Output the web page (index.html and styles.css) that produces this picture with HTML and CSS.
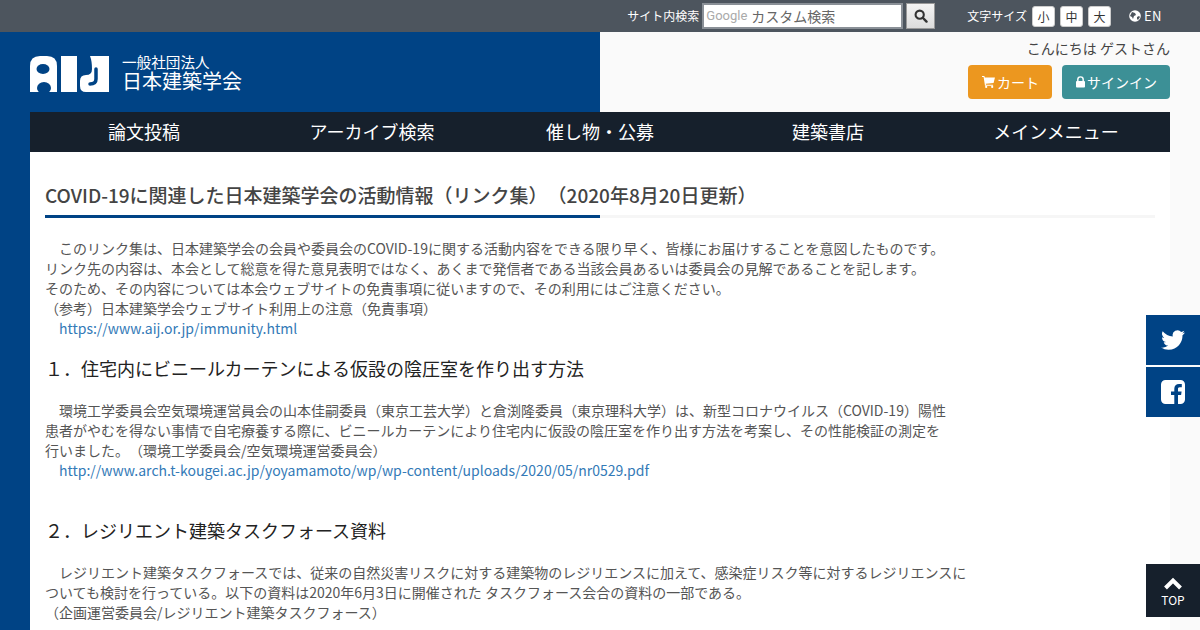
FILE: index.html
```html
<!DOCTYPE html>
<html lang="ja">
<head>
    <meta charset="UTF-8">
    <meta name="viewport" content="width=device-width, initial-scale=1.0">
    <title>COVID-19に関連した日本建築学会の活動情報</title>
    <link rel="stylesheet" href="styles.css">
</head>
<body>
    <div class="topbar">
        <span class="search-label">サイト内検索</span>
        <div class="search-box">
            <span class="google">Google</span>
            <span class="search-hint">カスタム検索</span>
        </div>
        <button class="search-btn" aria-label="検索">
            <svg viewBox="0 0 16 16" width="14" height="14"><circle cx="6.5" cy="6.5" r="4.7" fill="none" stroke="#333" stroke-width="2.4"/><path d="M10 10l4.3 4.3" stroke="#333" stroke-width="2.8" stroke-linecap="round"/></svg>
        </button>
        <span class="size-label">文字サイズ</span>
        <span class="size-btn">小</span>
        <span class="size-btn">中</span>
        <span class="size-btn">大</span>
        <a class="lang" href="#">
            <svg viewBox="0 0 12 12" width="12" height="12"><circle cx="6" cy="6" r="5.8" fill="#fff"/><path d="M3 2l3 1 1 2-2 1-1 3-1-2-2-1zM8 7l2-1 1 1-2 3-1-1z" fill="#4d555e"/></svg>
            EN
        </a>
    </div>

    <div class="page">
        <header class="header">
            <div class="header-left">
                <svg class="logo-mark" viewBox="0 0 80 36" width="80" height="36">
                    <path d="M0 36V10Q0 0 10 0H17Q27 0 27 10V36z" fill="#fff"/>
                    <ellipse cx="13" cy="13" rx="6.500" ry="5" fill="#004385"/>
                    <ellipse cx="14" cy="32" rx="7" ry="6" fill="#004385"/>
                    <rect x="0" y="36" width="27" height="2" fill="#004385"/>
                    <rect x="31" y="0" width="16" height="36" fill="#fff"/>
                    <path d="M60 0H79V36H56Q50 36 50 30V25Q50 19 56 19Q62 19 62 13Q62 5 60 0z" fill="#fff"/>
                    <path d="M66 13V23Q66 28 60 28" fill="none" stroke="#004385" stroke-width="3.500" stroke-linecap="round"/>
                </svg>
                <div class="logo-text">
                    <span class="logo-small">一般社団法人</span>
                    <span class="logo-big">日本建築学会</span>
                </div>
            </div>
            <div class="header-right">
                <p class="greeting">こんにちは ゲストさん</p>
                <div class="header-btns">
                    <a class="btn btn-cart" href="#">
                        <svg viewBox="0 0 14 13" width="13" height="12"><path d="M0 0h2.500l.5 1.500h11L12.500 7.500 4 8.500l.3 1H12v1H3.200L1.700 1H0z" fill="#fff"/><circle cx="4.500" cy="11.800" r="1.200" fill="#fff"/><circle cx="11" cy="11.800" r="1.200" fill="#fff"/></svg>カート
                    </a>
                    <a class="btn btn-signin" href="#">
                        <svg viewBox="0 0 10 13" width="9" height="12"><path d="M2 6V3.800a3 3 0 0 1 6 0V6" fill="none" stroke="#fff" stroke-width="1.600"/><rect x="0" y="5.500" width="10" height="7" rx="1" fill="#fff"/></svg>サインイン
                    </a>
                </div>
            </div>
        </header>

        <nav class="nav">
            <a href="#">論文投稿</a>
            <a href="#">アーカイブ検索</a>
            <a href="#">催し物・公募</a>
            <a href="#">建築書店</a>
            <a href="#">メインメニュー</a>
        </nav>

        <main class="content">
            <h2 class="page-title"><span>COVID-19に関連した日本建築学会の活動情報（リンク集）（2020年8月20日更新）</span></h2>

            <p class="block">　このリンク集は、日本建築学会の会員や委員会のCOVID-19に関する活動内容をできる限り早く、皆様にお届けすることを意図したものです。<br>
            リンク先の内容は、本会として総意を得た意見表明ではなく、あくまで発信者である当該会員あるいは委員会の見解であることを記します。<br>
            そのため、その内容については本会ウェブサイトの免責事項に従いますので、その利用にはご注意ください。<br>
            （参考）日本建築学会ウェブサイト利用上の注意（免責事項）<br>
            　<a href="#">https://www.aij.or.jp/immunity.html</a></p>

            <h3 class="section-title">１．住宅内にビニールカーテンによる仮設の陰圧室を作り出す方法</h3>

            <p class="block">　環境工学委員会空気環境運営員会の山本佳嗣委員（東京工芸大学）と倉渕隆委員（東京理科大学）は、新型コロナウイルス（COVID-19）陽性<br>
            患者がやむを得ない事情で自宅療養する際に、ビニールカーテンにより住宅内に仮設の陰圧室を作り出す方法を考案し、その性能検証の測定を<br>
            行いました。（環境工学委員会/空気環境運営委員会）<br>
            　<a href="#">http://www.arch.t-kougei.ac.jp/yoyamamoto/wp/wp-content/uploads/2020/05/nr0529.pdf</a></p>

            <h3 class="section-title section-gap">２．レジリエント建築タスクフォース資料</h3>

            <p class="block">　レジリエント建築タスクフォースでは、従来の自然災害リスクに対する建築物のレジリエンスに加えて、感染症リスク等に対するレジリエンスに<br>
            ついても検討を行っている。以下の資料は2020年6月3日に開催された タスクフォース会合の資料の一部である。<br>
            （企画運営委員会/レジリエント建築タスクフォース）</p>
        </main>
    </div>

    <div class="side-share">
        <a href="#" aria-label="Twitter">
            <svg viewBox="0 0 24 24" width="24" height="24"><path d="M24 4.600a9.800 9.800 0 0 1-2.800.8A4.900 4.900 0 0 0 23.300 2.700a9.800 9.800 0 0 1-3.100 1.200 4.900 4.900 0 0 0-8.400 4.500A14 14 0 0 1 1.700 3.200a4.900 4.900 0 0 0 1.500 6.600 4.900 4.900 0 0 1-2.200-.6v.1a4.900 4.900 0 0 0 3.900 4.800 4.900 4.900 0 0 1-2.200.1 4.900 4.900 0 0 0 4.600 3.400A9.900 9.900 0 0 1 0 19.600a14 14 0 0 0 7.500 2.200c9.100 0 14-7.500 14-14v-.6A10 10 0 0 0 24 4.600z" fill="#fff"/></svg>
        </a>
        <a href="#" aria-label="Facebook">
            <svg viewBox="0 0 24 24" width="24" height="24"><path d="M4.500 0h15A4.500 4.500 0 0 1 24 4.500v15a4.500 4.500 0 0 1-4.500 4.500H17v-9h3.100l.5-3.600H17V9.100c0-1 .3-1.800 1.800-1.800h2V4.100c-.4-.1-1.500-.2-2.800-.2-2.800 0-4.700 1.700-4.700 4.800v2.700H10V15h3.300v9H4.500A4.500 4.500 0 0 1 0 19.500v-15A4.500 4.500 0 0 1 4.500 0z" fill="#fff"/></svg>
        </a>
    </div>

    <a class="to-top" href="#">
        <svg viewBox="0 0 20 13" width="20" height="13"><path d="M2.500 11L10 3.500 17.500 11" fill="none" stroke="#fff" stroke-width="4"/></svg>
        <span>TOP</span>
    </a>
</body>
</html>
```

FILE: styles.css
```css
* {
    box-sizing: border-box;
}
html, body {
    height: 630px;
    overflow: hidden;
}
body {
    margin: 0;
    font-family: "Noto Sans CJK JP", "Noto Sans", sans-serif;
    font-size: 14px;
    line-height: 20px;
    color: #555;
    text-spacing-trim: space-all;
    background: linear-gradient(90deg, #004385 50%, #fafafa 50%);
}
a {
    text-decoration: none;
}

/* top bar */
.topbar {
    height: 32px;
    background: #4d555e;
    color: #fff;
    display: flex;
    align-items: center;
    justify-content: flex-end;
    padding: 0 38px 0 0;
    font-size: 12px;
}
.search-label {
    margin-right: 3px;
}
.search-box {
    width: 201px;
    height: 26px;
    background: #fff;
    border: 2px solid #8a9097;
    display: flex;
    align-items: center;
    padding-left: 2px;
    color: #666;
    font-size: 14px;
}
.google {
    font-family: "Roboto", sans-serif;
    font-size: 13px;
    color: #aaa;
    margin-right: 4px;
}
.search-btn {
    width: 29px;
    height: 26px;
    margin-left: 3px;
    padding: 0;
    display: flex;
    align-items: center;
    justify-content: center;
    background: linear-gradient(#f4f4f4, #dcdcdc);
    border: 1px solid #999;
}
.size-label {
    margin-left: 32px;
    margin-right: 5px;
}
.size-btn {
    width: 23px;
    height: 21px;
    margin-right: 5px;
    background: #fff;
    color: #333;
    border-radius: 3px;
    border: 1px solid #ccc;
    text-align: center;
    line-height: 19px;
}
.lang {
    color: #fff;
    margin-left: 13px;
    font-size: 13px;
    display: flex;
    align-items: center;
    gap: 3px;
    letter-spacing: 0.5px;
}

/* header */
.page {
    padding: 0 30px;
}
.header {
    display: flex;
    height: 80px;
    margin: 0 -30px;
}
.header-left {
    width: 600px;
    padding: 24px 0 0 30px;
    display: flex;
    align-items: flex-start;
    gap: 12px;
}
.logo-text {
    display: flex;
    flex-direction: column;
    color: #fff;
    margin-top: -2px;
}
.logo-small {
    font-size: 14.600px;
    line-height: 16px;
}
.logo-big {
    font-size: 20px;
    line-height: 22px;
}
.header-right {
    width: 600px;
    padding: 6px 30px 0 0;
    text-align: right;
    color: #444;
}
.greeting {
    margin: 0 0 7px;
}
.header-btns {
    display: flex;
    justify-content: flex-end;
    gap: 10px;
}
.btn {
    height: 34px;
    padding: 0 13px 0 14px;
    border-radius: 4px;
    color: #fff;
    display: flex;
    align-items: center;
    gap: 2px;
}
.btn-cart {
    background: #ec971f;
}
.btn-signin {
    background: #3c9096;
}

/* main nav */
.nav {
    height: 40px;
    background: #16202c;
    display: grid;
    grid-template-columns: repeat(5, 1fr);
}
.nav a {
    color: #fff;
    font-size: 18px;
    line-height: 38px;
    text-align: center;
}

/* content */
.content {
    background: #fff;
    padding: 29px 15px 0;
    height: 478px;
    overflow: hidden;
}
.page-title {
    margin: 0 0 20px;
    font-size: 19px;
    font-weight: 500;
    line-height: 28px;
    color: #444;
    border-bottom: 3px solid #f6f6f6;
    height: 37px;
}
.page-title span {
    display: block;
    width: 555px;
    height: 37px;
    white-space: nowrap;
    border-bottom: 3px solid #004385;
}
.block {
    margin: 0;
}
.block a {
    color: #337ab7;
}
.section-title {
    margin: 20px 0 22px;
    font-size: 18px;
    font-weight: 400;
    line-height: 20px;
    color: #222;
}
.section-gap {
    margin-top: 40px;
}

/* fixed side buttons */
.side-share {
    position: fixed;
    top: 315px;
    right: 0;
    display: flex;
    flex-direction: column;
    gap: 2px;
}
.side-share a {
    width: 54px;
    height: 50px;
    background: #004385;
    display: flex;
    align-items: center;
    justify-content: center;
}
.to-top {
    position: fixed;
    top: 564px;
    right: 0;
    width: 54px;
    height: 53px;
    background: #16202c;
    color: #fff;
    font-size: 12px;
    line-height: 14px;
    display: flex;
    flex-direction: column;
    align-items: center;
    padding-top: 13px;
    gap: 3px;
}
```
